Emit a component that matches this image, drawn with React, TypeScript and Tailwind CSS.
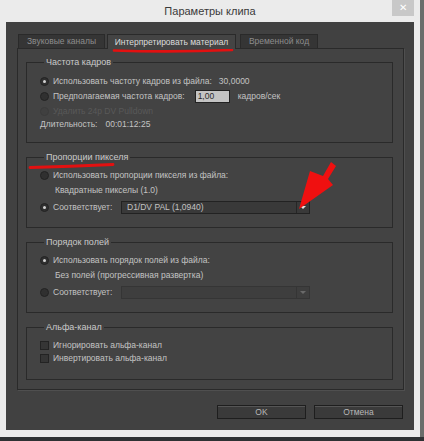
const textClass = "text-[8.5px] leading-none text-[#c3c3c3]";

function Radio({ checked, disabled }: { checked?: boolean; disabled?: boolean }) {
  return (
    <span
      className={`flex h-[9px] w-[9px] shrink-0 items-center justify-center rounded-full border ${
        disabled ? "border-[#3b3b3b] bg-[#404040]" : "border-[#232323] bg-[#303030]"
      }`}
    >
      {checked && <span className="h-[3px] w-[3px] rounded-full bg-[#d2d2d2]" />}
    </span>
  );
}

function Checkbox() {
  return <span className="h-[9px] w-[9px] shrink-0 border border-[#232323] bg-[#353535]" />;
}

function Dropdown({ value, disabled }: { value?: string; disabled?: boolean }) {
  return (
    <div
      className={`flex h-[13px] w-[189px] border ${
        disabled ? "border-[#353535] bg-[#3e3e3e]" : "border-[#222222] bg-[#393939]"
      }`}
    >
      <span className={`flex-1 pl-[5px] ${textClass} flex items-center`}>{value}</span>
      <span
        className={`flex w-[13px] items-center justify-center border-l ${
          disabled ? "border-[#353535]" : "border-[#262626]"
        }`}
      >
        <span
          className={`h-0 w-0 border-x-[3px] border-t-[3px] border-x-transparent ${
            disabled ? "border-t-[#6a6a6a]" : "border-t-[#e0e0e0]"
          }`}
        />
      </span>
    </div>
  );
}

function Group({
  title,
  children,
  pt,
  pb = "pb-[11px]",
}: {
  title: string;
  children: React.ReactNode;
  pt: string;
  pb?: string;
}) {
  return (
    <fieldset className={`border border-[#2a2a2a] pl-[13px] ${pt} ${pb}`}>
      <legend className="ml-[4px] h-[12px] px-[2px] text-[9px] leading-[12px] text-[#cacaca]">
        {title}
      </legend>
      {children}
    </fieldset>
  );
}

function Row({ children, h = "h-[15px]" }: { children: React.ReactNode; h?: string }) {
  return <div className={`flex items-center gap-[4px] ${h}`}>{children}</div>;
}

export default function App() {
  return (
    <div className="relative h-[441px] w-[424px] overflow-hidden bg-[#2e3133] font-['Liberation_Sans',Arial,sans-serif]">
      <div className="flex h-[437px] w-[420px] flex-col bg-[#ebebeb]">
        {/* title bar */}
        <div className="relative flex h-[22px] items-center justify-center">
          <span className="text-[11px] text-[#3a3a3a]">Параметры клипа</span>
          <span className="absolute right-[6px] top-0 flex h-[16px] w-[22px] items-center justify-center bg-[#c8c8c8] text-[10px] leading-none text-white">
            ✕
          </span>
        </div>

        {/* dialog body */}
        <div className="mx-[6px] mb-[7px] flex flex-1 flex-col bg-[#414141] pl-[11px] pr-[10px] pt-[12px]">
          {/* tabs */}
          <div className="relative z-10 flex h-[14px] items-end pl-[1px]">
            <div className="flex h-[14px] w-[87px] items-center justify-center border border-b-0 border-[#2a2a2a] bg-[#353535] text-[8.5px] leading-none text-[#8d8d8d]">
              Звуковые каналы
            </div>
            <div className="-mb-px ml-[2px] flex h-[15px] w-[129px] items-center justify-center border border-b-0 border-[#2a2a2a] bg-[#444444] text-[8.5px] leading-none text-[#dcdcdc]">
              Интерпретировать материал
            </div>
            <div className="ml-[4px] flex h-[14px] w-[78px] items-center justify-center border border-b-0 border-[#2a2a2a] bg-[#353535] text-[8.5px] leading-none text-[#8d8d8d]">
              Временной код
            </div>
          </div>

          {/* tab panel */}
          <div className="flex h-[342px] flex-col gap-[8px] border border-[#2a2a2a] bg-[#434343] pl-[8px] pr-[10px] pt-[7px] shadow-[1px_1px_0_#4f4f4f]">
            <Group title="Частота кадров" pt="pt-[6px]" pb="pb-[12px]">
              <Row>
                <Radio checked />
                <span className={textClass}>Использовать частоту кадров из файла:</span>
                <span className={`ml-[3px] ${textClass}`}>30,0000</span>
              </Row>
              <Row>
                <Radio />
                <span className={textClass}>Предполагаемая частота кадров:</span>
                <span className="ml-[6px] flex h-[13px] w-[35px] items-center border border-[#222222] bg-[#c4c4c4] pl-[2px] text-[8.5px] leading-none text-[#2a2a2a]">
                  1,00
                </span>
                <span className={`ml-[4px] ${textClass}`}>кадров/сек</span>
              </Row>
              <Row>
                <Radio disabled />
                <span className="text-[8.5px] leading-none text-[#595959]">Удалить 24p DV Pulldown</span>
              </Row>
              <div className="flex h-[11px] items-center">
                <span className={textClass}>Длительность:</span>
                <span className={`ml-[8px] ${textClass}`}>00:01:12:25</span>
              </div>
            </Group>

            <Group title="Пропорции пикселя" pt="pt-[5px]">
              <Row>
                <Radio />
                <span className={textClass}>Использовать пропорции пикселя из файла:</span>
              </Row>
              <div className="flex h-[15px] items-center pl-[15px]">
                <span className={textClass}>Квадратные пикселы (1.0)</span>
              </div>
              <Row h="h-[18px]">
                <Radio checked />
                <span className={`w-[64px] ${textClass}`}>Соответствует:</span>
                <Dropdown value="D1/DV PAL (1,0940)" />
              </Row>
            </Group>

            <Group title="Порядок полей" pt="pt-[5px]">
              <Row>
                <Radio checked />
                <span className={textClass}>Использовать порядок полей из файла:</span>
              </Row>
              <div className="flex h-[15px] items-center pl-[15px]">
                <span className={textClass}>Без полей (прогрессивная развертка)</span>
              </div>
              <Row h="h-[18px]">
                <Radio />
                <span className={`w-[64px] ${textClass}`}>Соответствует:</span>
                <Dropdown disabled />
              </Row>
            </Group>

            <Group title="Альфа-канал" pt="pt-[6px]" pb="pb-[14px]">
              <Row h="h-[13px]">
                <Checkbox />
                <span className={textClass}>Игнорировать альфа-канал</span>
              </Row>
              <Row h="h-[13px]">
                <Checkbox />
                <span className={textClass}>Инвертировать альфа-канал</span>
              </Row>
            </Group>
          </div>

          {/* buttons */}
          <div className="mt-[15px] flex justify-end gap-[8px] pr-[1px]">
            <button className="flex h-[14px] w-[89px] items-center justify-center border border-[#1e1e1e] bg-[#3a3a3a] text-[8.5px] leading-none text-[#b8b8b8] shadow-[inset_0_1px_0_#555555]">
              OK
            </button>
            <button className="flex h-[14px] w-[89px] items-center justify-center border border-[#1e1e1e] bg-[#3a3a3a] text-[8.5px] leading-none text-[#b8b8b8] shadow-[inset_0_1px_0_#555555]">
              Отмена
            </button>
          </div>
        </div>
      </div>
      <div className="absolute right-0 top-0 h-[437px] w-[4px] bg-[#6a6d6b]" />

      {/* red annotation marks */}
      <svg className="pointer-events-none absolute inset-0" width="424" height="441" viewBox="0 0 424 441">
        <path d="M114 50.5 Q170 52.5 232 50" stroke="#e31010" strokeWidth="2.6" fill="none" strokeLinecap="round" />
        <path d="M30 167.5 Q70 166.5 113 164.5" stroke="#e31010" strokeWidth="2.8" fill="none" strokeLinecap="round" />
        <polygon points="331,162 336,166 328,179 333,185 299,209 310,171 323,176" fill="#f01010" />
      </svg>
    </div>
  );
}
